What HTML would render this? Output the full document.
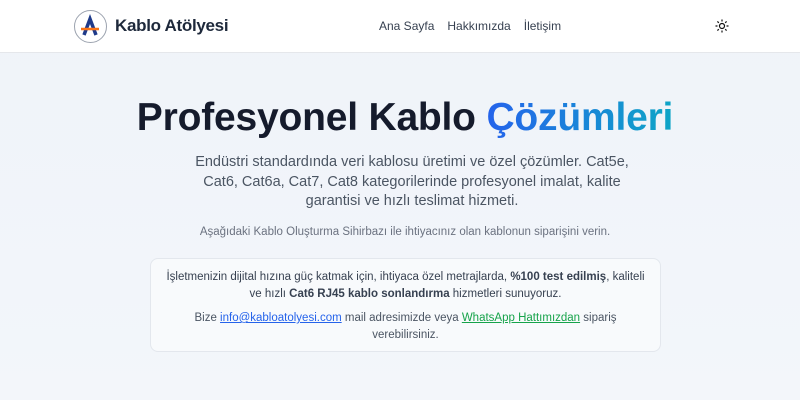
<!DOCTYPE html>
<html><head><meta charset="utf-8"><style>
*{margin:0;padding:0;box-sizing:border-box}
body{width:800px;height:400px;overflow:hidden;font-family:"Liberation Sans",sans-serif;background:linear-gradient(180deg,#eff3f9,#f3f6fa);color:#1f2937}
header{height:53px;background:#fff;border-bottom:1px solid #e5e7eb;position:relative}
.logo{position:absolute;left:74px;top:10px;width:33px;height:33px;border-radius:50%;border:1.5px solid #9ca3af;background:#fff}
.brand{position:absolute;left:115px;top:16px;font-size:17px;font-weight:bold;color:#1e293b;letter-spacing:-0.3px}
nav{position:absolute;top:19px;left:379px;font-size:12px;color:#374151}
nav span{margin-right:13px}
.sun{position:absolute;left:715px;top:19px}
h1{position:absolute;top:96px;left:5px;width:800px;text-align:center;font-size:39px;font-weight:bold;color:#151b2c;letter-spacing:-0.2px}
h1 b{background:linear-gradient(90deg,#2563eb,#0ea5c6);-webkit-background-clip:text;color:transparent}
.sub{position:absolute;top:153px;left:190px;width:444px;text-align:center;font-size:14.5px;line-height:19.5px;color:#4b5563}
.hint{position:absolute;top:226px;left:5px;width:800px;text-align:center;font-size:11.5px;color:#6b7280}
.box{position:absolute;left:150px;top:258px;width:511px;height:94px;background:#f8fafc;border:1px solid #e3e7ed;border-radius:8px;text-align:center;font-size:11.5px;color:#374151;padding:10px 14px 0}
.box p{line-height:17px}
.box p+p{margin-top:7px;color:#4b5563}
a.m{color:#2563eb;text-decoration:underline}
a.w{color:#16a34a;text-decoration:underline}
</style></head><body>
<header>
<div class="logo"><svg width="30" height="30" viewBox="0 0 30 30"><path d="M9 24 L15 8 L21 24" stroke="#1e3a8a" stroke-width="3.5" fill="none"/><path d="M6 18 H24" stroke="#f97316" stroke-width="2.5"/></svg></div>
<div class="brand">Kablo Atölyesi</div>
<nav><span>Ana Sayfa</span><span>Hakkımızda</span><span>İletişim</span></nav>
<svg class="sun" width="14" height="14" viewBox="0 0 14 14" stroke="#111" stroke-width="1.2" fill="none"><circle cx="7" cy="7" r="2.5"/><path d="M7 0.5v2M7 11.5v2M0.5 7h2M11.5 7h2M2.4 2.4l1.4 1.4M10.2 10.2l1.4 1.4M2.4 11.6l1.4-1.4M10.2 3.8l1.4-1.4"/></svg>
</header>
<h1>Profesyonel Kablo <b>Çözümleri</b></h1>
<div class="sub">Endüstri standardında veri kablosu üretimi ve özel çözümler. Cat5e, Cat6, Cat6a, Cat7, Cat8 kategorilerinde profesyonel imalat, kalite garantisi ve hızlı teslimat hizmeti.</div>
<div class="hint">Aşağıdaki Kablo Oluşturma Sihirbazı ile ihtiyacınız olan kablonun siparişini verin.</div>
<div class="box">
<p>İşletmenizin dijital hızına güç katmak için, ihtiyaca özel metrajlarda, <b>%100 test edilmiş</b>, kaliteli ve hızlı <b>Cat6 RJ45 kablo sonlandırma</b> hizmetleri sunuyoruz.</p>
<p>Bize <a class="m">info@kabloatolyesi.com</a> mail adresimizde veya <a class="w">WhatsApp Hattımızdan</a> sipariş verebilirsiniz.</p>
</div>
</body></html>
